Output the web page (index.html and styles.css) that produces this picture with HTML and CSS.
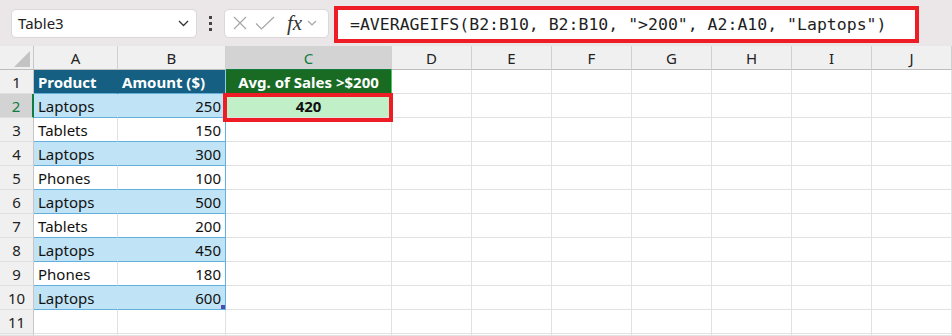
FILE: index.html
```html
<!DOCTYPE html>
<html lang="en">
<head>
  <meta charset="UTF-8" />
  <title>AVERAGEIFS example</title>
  <link rel="stylesheet" href="styles.css">
</head>
<body>
  <div class="toolbar">
    <div class="namebox">
      <span>Table3</span>
      <svg class="chev" width="11" height="7" viewBox="0 0 11 7"><path d="M1 1l4.5 4.5L10 1" fill="none" stroke="#333" stroke-width="1.3"/></svg>
    </div>
    <div class="grip"><i></i><i></i><i></i></div>
    <div class="fxbox">
      <svg width="14" height="14" viewBox="0 0 14 14"><path d="M1 1l12 12M13 1L1 13" stroke="#a6a6a6" stroke-width="1.2"/></svg>
      <svg width="20" height="14" viewBox="0 0 20 14"><path d="M1 7.5l5.5 5.5L19 1" fill="none" stroke="#a6a6a6" stroke-width="1.2"/></svg>
      <span class="fx">fx</span>
      <svg width="10" height="6" viewBox="0 0 10 6"><path d="M1 1l4 4 4-4" fill="none" stroke="#a6a6a6" stroke-width="1.2"/></svg>
    </div>
    <div class="formula">=AVERAGEIFS(B2:B10, B2:B10, "&gt;200", A2:A10, "Laptops")</div>
  </div>

  <div class="sheet">
    <div class="grid">
      <div class="c rh corner"><span class="tri"></span></div>
      <div class="c ch">A</div><div class="c ch">B</div><div class="c ch sel">C</div>
      <div class="c ch">D</div><div class="c ch">E</div><div class="c ch">F</div><div class="c ch">G</div><div class="c ch">H</div><div class="c ch">I</div><div class="c ch">J</div>

      <div class="c rh">1</div>
      <div class="c th a">Product</div><div class="c th b">Amount ($)</div><div class="c gh">Avg. of Sales &gt;$200</div>
      <div class="c"></div><div class="c"></div><div class="c"></div><div class="c"></div><div class="c"></div><div class="c"></div><div class="c"></div>

      <div class="c rh rsel">2</div>
      <div class="c band a">Laptops</div><div class="c band b num">250</div><div class="c result">420</div>
      <div class="c"></div><div class="c"></div><div class="c"></div><div class="c"></div><div class="c"></div><div class="c"></div><div class="c"></div>

      <div class="c rh">3</div>
      <div class="c plain a">Tablets</div><div class="c plain b num">150</div><div class="c"></div>
      <div class="c"></div><div class="c"></div><div class="c"></div><div class="c"></div><div class="c"></div><div class="c"></div><div class="c"></div>

      <div class="c rh">4</div>
      <div class="c band a">Laptops</div><div class="c band b num">300</div><div class="c"></div>
      <div class="c"></div><div class="c"></div><div class="c"></div><div class="c"></div><div class="c"></div><div class="c"></div><div class="c"></div>

      <div class="c rh">5</div>
      <div class="c plain a">Phones</div><div class="c plain b num">100</div><div class="c"></div>
      <div class="c"></div><div class="c"></div><div class="c"></div><div class="c"></div><div class="c"></div><div class="c"></div><div class="c"></div>

      <div class="c rh">6</div>
      <div class="c band a">Laptops</div><div class="c band b num">500</div><div class="c"></div>
      <div class="c"></div><div class="c"></div><div class="c"></div><div class="c"></div><div class="c"></div><div class="c"></div><div class="c"></div>

      <div class="c rh">7</div>
      <div class="c plain a">Tablets</div><div class="c plain b num">200</div><div class="c"></div>
      <div class="c"></div><div class="c"></div><div class="c"></div><div class="c"></div><div class="c"></div><div class="c"></div><div class="c"></div>

      <div class="c rh">8</div>
      <div class="c band a">Laptops</div><div class="c band b num">450</div><div class="c"></div>
      <div class="c"></div><div class="c"></div><div class="c"></div><div class="c"></div><div class="c"></div><div class="c"></div><div class="c"></div>

      <div class="c rh">9</div>
      <div class="c plain a">Phones</div><div class="c plain b num">180</div><div class="c"></div>
      <div class="c"></div><div class="c"></div><div class="c"></div><div class="c"></div><div class="c"></div><div class="c"></div><div class="c"></div>

      <div class="c rh">10</div>
      <div class="c band a">Laptops</div><div class="c band b num">600</div><div class="c"></div>
      <div class="c"></div><div class="c"></div><div class="c"></div><div class="c"></div><div class="c"></div><div class="c"></div><div class="c"></div>

      <div class="c rh">11</div>
      <div class="c"></div><div class="c"></div><div class="c"></div>
      <div class="c"></div><div class="c"></div><div class="c"></div><div class="c"></div><div class="c"></div><div class="c"></div><div class="c"></div>

      <div class="c rh"></div>
      <div class="c"></div><div class="c"></div><div class="c"></div>
      <div class="c"></div><div class="c"></div><div class="c"></div><div class="c"></div><div class="c"></div><div class="c"></div><div class="c"></div>
    </div>
    <span class="resize"></span>
    <span class="fill"></span>
    <div class="callout"></div>
  </div>
</body>
</html>
```

FILE: styles.css
```css
* {
  box-sizing: border-box;
}
body {
  margin: 0;
  width: 952px;
  height: 336px;
  overflow: hidden;
  font-family: "Noto Sans", sans-serif;
  background: #fff;
  color: #111;
}
.toolbar {
  height: 46px;
  background: #ebe7e8;
  display: flex;
  align-items: center;
  padding-left: 11px;
}
.namebox {
  width: 186px;
  height: 29px;
  background: #fff;
  border: 1px solid #dcd8d9;
  border-radius: 5px;
  display: flex;
  align-items: center;
  justify-content: space-between;
  padding: 0 7px 0 6px;
  font-size: 15px;
  color: #222;
}
.grip {
  width: 27px;
  display: flex;
  flex-direction: column;
  align-items: center;
  gap: 3px;
}
.grip i {
  width: 3px;
  height: 3px;
  background: #444;
}
.fxbox {
  width: 105px;
  height: 29px;
  background: #fff;
  border: 1px solid #dcd8d9;
  border-radius: 5px;
  display: flex;
  align-items: center;
  gap: 8px;
  padding-left: 8px;
}
.fx {
  font-family: "Liberation Serif", serif;
  font-style: italic;
  font-size: 21px;
  line-height: 20px;
  color: #333;
  margin-left: 4px;
  margin-right: -3px;
}
.formula {
  margin-left: 5px;
  margin-top: 2px;
  width: 585px;
  height: 37px;
  border: 4px solid #ee1c25;
  background: #fff;
  padding-left: 12px;
  font-family: "DejaVu Sans Mono", monospace;
  font-size: 16.5px;
  line-height: 29px;
  color: #1e1e1e;
  white-space: nowrap;
}
.sheet {
  position: relative;
}
.grid {
  display: grid;
  grid-template-columns: 34px 84px 108px 166px repeat(7, 80px);
  grid-template-rows: 24px repeat(11, 24px) 2px;
}
.c {
  border-right: 1px solid #e1e1e1;
  border-bottom: 1px solid #e1e1e1;
  font-size: 15px;
  line-height: 23px;
  padding: 1px 4px 0;
  white-space: nowrap;
  overflow: hidden;
}
.rh {
  background: #f0f0f0;
  border-right-color: #c6c6c6;
  text-align: center;
  padding: 1px 0 0;
  color: #222;
}
.corner {
  position: relative;
  border-bottom-color: #bdbdbd;
}
.tri {
  position: absolute;
  right: 3px;
  bottom: 2px;
  width: 0;
  height: 0;
  border-left: 16px solid transparent;
  border-bottom: 16px solid #c3c3c3;
}
.ch {
  background: #f0f0f0;
  border-right-color: #d0d0d0;
  border-bottom-color: #bdbdbd;
  text-align: center;
  color: #222;
}
.ch.sel {
  background: #d3d3d3;
  color: #107c41;
  border-bottom: 1px solid #107c41;
}
.rh.rsel {
  background: #d3d3d3;
  color: #107c41;
  border-right: 2px solid #107c41;
}
.th {
  background: #156082;
  color: #fff;
  font-weight: 700;
  border-bottom-color: #61b0de;
}
.th.a {
  border-right-color: #156082;
}
.th.b {
  border-right-color: #8ccdee;
}
.gh {
  background: #196b24;
  color: #fff;
  font-weight: 700;
  text-align: center;
  border-right-color: #3fd35a;
  border-bottom-color: #196b24;
}
.band {
  background: #c0e4f5;
  border-bottom-color: #61b0de;
}
.band.a {
  border-right-color: #c0e4f5;
}
.plain {
  border-bottom-color: #61b0de;
}
.b {
  border-right-color: #61b0de;
}
.num {
  text-align: right;
}
.result {
  background: #c1f0c8;
  font-weight: 700;
  text-align: center;
}
.callout {
  position: absolute;
  left: 223px;
  top: 47px;
  width: 170px;
  height: 29px;
  border: 4px solid #ee1c25;
}
.fill {
  position: absolute;
  left: 389px;
  top: 69px;
  width: 5px;
  height: 5px;
  background: #1b5e3a;
  border: 1px solid #fff;
}
.resize {
  position: absolute;
  left: 221px;
  top: 259px;
  width: 4px;
  height: 4px;
  background: #4b4bb0;
}
```
